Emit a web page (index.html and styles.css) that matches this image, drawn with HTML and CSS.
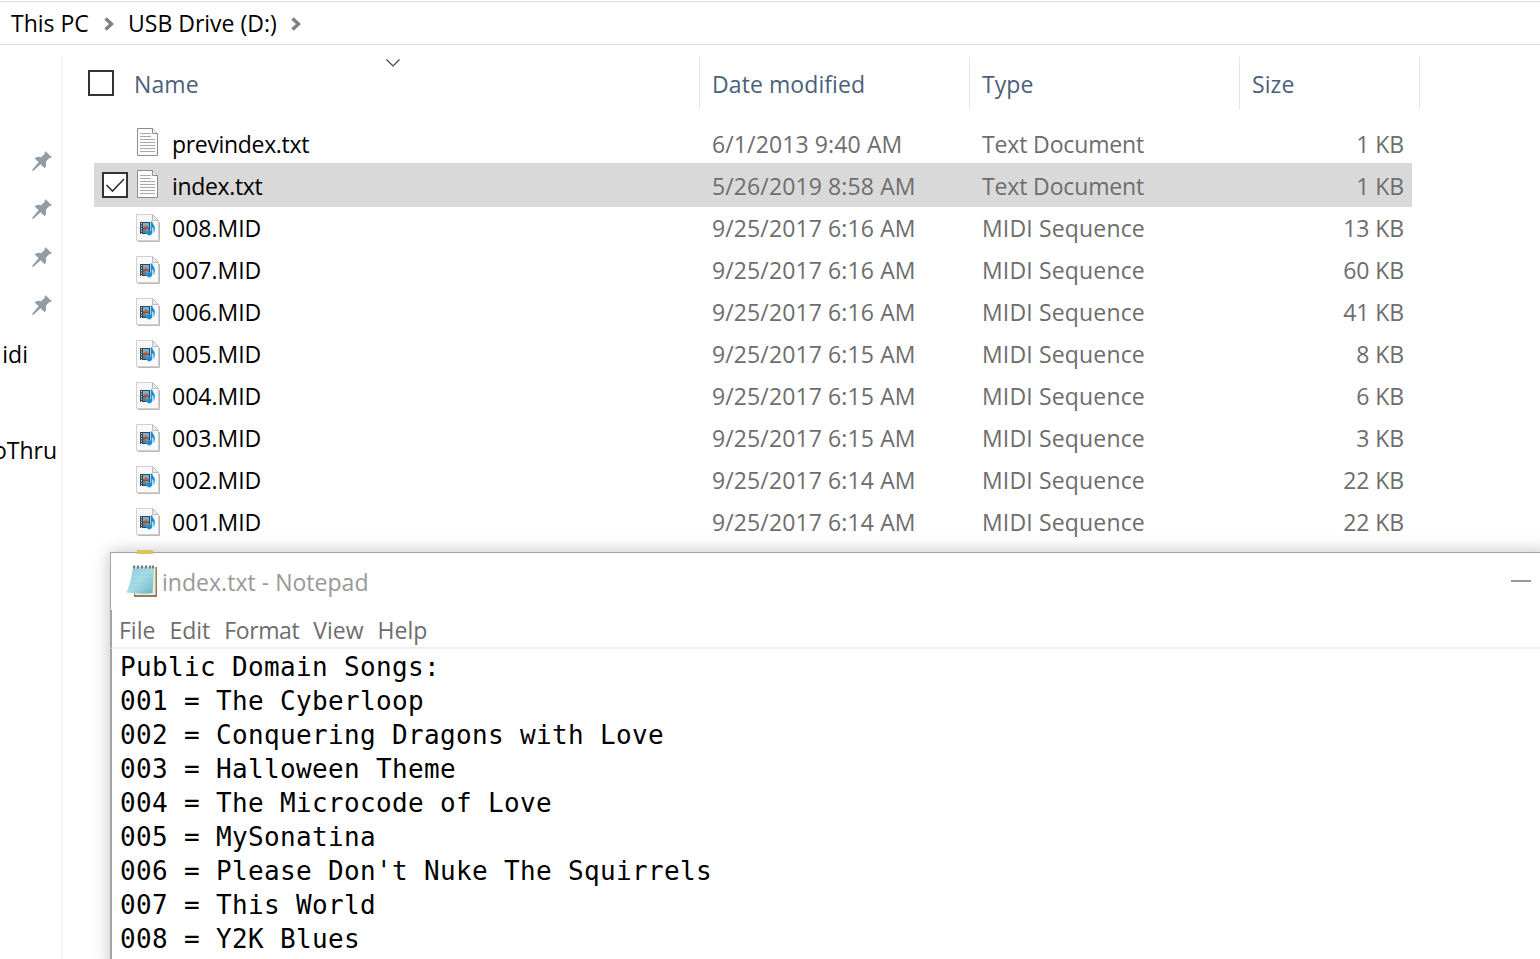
FILE: index.html
```
<!DOCTYPE html>
<html lang="en">
<head>
<meta charset="utf-8">
<title>USB Drive (D:)</title>
<link rel="stylesheet" href="styles.css">
</head>
<body>
<svg class="defs" width="0" height="0" aria-hidden="true">
  <symbol id="txt" viewBox="0 0 24 30">
    <path d="M1.500 1.500H16.500L21.500 6.500V28.500H1.500Z" fill="#fbfbfb" stroke="#8c8c8c"/>
    <path d="M16.500 1.500V6.500H21.500" fill="#f4f4f4" stroke="#8c8c8c"/>
    <path d="M4 6.500H15M4 9.500H15M4 12.500H19M4 15.500H19M4 18.500H19M4 21.500H19M4 24.500H19" stroke="#a9a9a9"/>
  </symbol>
  <symbol id="mid" viewBox="0 0 24 28">
    <path d="M2 27.500H23.500V8" fill="none" stroke="#b9b9b9" stroke-width="1"/>
    <path d="M.5.500H16.500L22.500 6.500V26.500H.5Z" fill="#f9f9f9" stroke="#d0d0d0"/>
    <path d="M16.500.500V6.500H22.500Z" fill="#e9e9e9" stroke="#bdbdbd"/>
    <path d="M4 8H14V20H4Z" fill="#3c4248"/>
    <path d="M5.500 9V20" stroke="#e2e2e2" stroke-dasharray="1.200 1.300"/>
    <path d="M7 9H13V13.500H7Z" fill="#6bb8dc"/><path d="M7 14.500H13V19H7Z" fill="#4389ae"/>
    <path d="M7 13.500L10 11L13 13.500Z" fill="#dc5937"/><path d="M8 16L12 14.500V17Z" fill="#dd8052"/>
    <path d="M14.700 7.500H16.200C16.600 10.500 19.500 11.500 18.800 15.500C18.600 17 18 18 17.300 18.700C18 15.600 17.500 14 16.200 13.300V18.500C16.200 20.500 14.200 21.800 12.200 21.200C10.200 20.500 10.200 18.200 12 17.100C13 16.500 14 16.500 14.700 16.800Z" fill="#1688d0" stroke="#79c7f1" stroke-width=".4"/>
  </symbol>
  <symbol id="pin" viewBox="0 0 20 20">
    <path d="M13.600.2L19.800 6.300L18.600 7.300L17.500 6.900L13.700 10.800C14.600 13.400 14.300 15.400 12.600 17.200L8.600 13.300L1.200 20L0 18.900L6.600 11.300L2.700 7.400C4.600 5.600 6.800 5.400 9.100 6.300L12.900 2.600L12.500 1.300Z" fill="#929da4"/>
  </symbol>
  <symbol id="next" viewBox="0 0 10 14">
    <path d="M1.500 1.500L7.500 7L1.500 12.500" fill="none" stroke="#808080" stroke-width="3.400"/>
  </symbol>
</svg>

<div class="screen">
  <header class="address">
    <span class="crumb pc">This PC</span>
    <svg class="next"><use href="#next"/></svg>
    <span class="crumb drive">USB Drive (D:)</span>
    <svg class="next"><use href="#next"/></svg>
  </header>

  <div class="explorer">
    <nav class="tree">
      <div class="node"><svg class="pin"><use href="#pin"/></svg></div>
      <div class="node"><svg class="pin"><use href="#pin"/></svg></div>
      <div class="node"><svg class="pin"><use href="#pin"/></svg></div>
      <div class="node"><svg class="pin"><use href="#pin"/></svg></div>
      <div class="node midi"><span>idi</span></div>
      <div class="node"></div>
      <div class="node thru"><span>oThru</span></div>
    </nav>

    <main class="files">
      <div class="heads">
        <div class="head first"><span class="box"></span><span class="h-name">Name</span>
          <svg class="sort" viewBox="0 0 14 8"><path d="M.5.500L7 7L13.500.500" fill="none" stroke="#444" stroke-width="1.200"/></svg></div>
        <div class="head h-date">Date modified</div>
        <div class="head h-type">Type</div>
        <div class="head h-size">Size</div>
      </div>
      <div class="rows">
        <div class="row"><svg class="icon txt"><use href="#txt"/></svg><span class="name prev">previndex.txt</span><span class="date">6/1/2013 9:40 AM</span><span class="type doc">Text Document</span><span class="size">1 KB</span></div>
        <div class="row selected"><span class="box"><svg viewBox="0 0 26 26"><path d="M4.500 13L10.500 19L22 7" fill="none" stroke="#333" stroke-width="1.600"/></svg></span><svg class="icon txt"><use href="#txt"/></svg><span class="name prev">index.txt</span><span class="date">5/26/2019 8:58 AM</span><span class="type doc">Text Document</span><span class="size">1 KB</span></div>
        <div class="row"><svg class="icon mid"><use href="#mid"/></svg><span class="name">008.MID</span><span class="date">9/25/2017 6:16 AM</span><span class="type">MIDI Sequence</span><span class="size">13 KB</span></div>
        <div class="row"><svg class="icon mid"><use href="#mid"/></svg><span class="name">007.MID</span><span class="date">9/25/2017 6:16 AM</span><span class="type">MIDI Sequence</span><span class="size">60 KB</span></div>
        <div class="row"><svg class="icon mid"><use href="#mid"/></svg><span class="name">006.MID</span><span class="date">9/25/2017 6:16 AM</span><span class="type">MIDI Sequence</span><span class="size">41 KB</span></div>
        <div class="row"><svg class="icon mid"><use href="#mid"/></svg><span class="name">005.MID</span><span class="date">9/25/2017 6:15 AM</span><span class="type">MIDI Sequence</span><span class="size">8 KB</span></div>
        <div class="row"><svg class="icon mid"><use href="#mid"/></svg><span class="name">004.MID</span><span class="date">9/25/2017 6:15 AM</span><span class="type">MIDI Sequence</span><span class="size">6 KB</span></div>
        <div class="row"><svg class="icon mid"><use href="#mid"/></svg><span class="name">003.MID</span><span class="date">9/25/2017 6:15 AM</span><span class="type">MIDI Sequence</span><span class="size">3 KB</span></div>
        <div class="row"><svg class="icon mid"><use href="#mid"/></svg><span class="name">002.MID</span><span class="date">9/25/2017 6:14 AM</span><span class="type">MIDI Sequence</span><span class="size">22 KB</span></div>
        <div class="row"><svg class="icon mid"><use href="#mid"/></svg><span class="name">001.MID</span><span class="date">9/25/2017 6:14 AM</span><span class="type">MIDI Sequence</span><span class="size">22 KB</span></div>
      </div>
    </main>
  </div>

  <section class="notepad">
    <span class="folder"></span>
    <div class="titlebar">
      <svg class="app" viewBox="0 0 32 36">
        <defs><linearGradient id="page" x1="0" y1="0" x2="1" y2="1"><stop offset="0" stop-color="#8fcbd9"/><stop offset=".5" stop-color="#a9dce7"/><stop offset="1" stop-color="#62b2c7"/></linearGradient></defs>
        <path d="M8 31L27 4H31V34H8Z" fill="#8e7c56"/>
        <path d="M9 30L27 4H29.500V32H9Z" fill="#f0ead6"/>
        <path d="M7 4H28L26.500 30Q17 31.500 .5 29.500Q5 20 7 4Z" fill="url(#page)"/>
        <path d="M7 8H27M6.500 12H27M6 16H26.500M5 20H26.500M4 24H26" stroke="#93cdda" stroke-width=".7"/>
        <path d="M8 2.500V5.500M12 2.500V5.500M16 2.500V5.500M20 2.500V5.500M24 2.500V5.500M27 2.500V5.500" stroke="#727c80" stroke-width="2"/>
        <path d="M9.500 3V6M13.500 3V6M17.500 3V6M21.500 3V6M25.500 3V6" stroke="#d3dcdf" stroke-width="1"/>
      </svg>
      <span class="title">index.txt - Notepad</span>
      <span class="minimize"></span>
    </div>
    <div class="menu"><span>File</span><span>Edit</span><span class="format">Format</span><span>View</span><span>Help</span></div>
    <pre class="text">Public Domain Songs:
001 = The Cyberloop
002 = Conquering Dragons with Love
003 = Halloween Theme
004 = The Microcode of Love
005 = MySonatina
006 = Please Don't Nuke The Squirrels
007 = This World
008 = Y2K Blues</pre>
  </section>
</div>
</body>
</html>
```
FILE: styles.css
```
* { box-sizing: border-box; }
body { margin: 0; background: #fff; font: 23px/42px "Open Sans", "Noto Sans", sans-serif; color: #000; }
.defs { position: absolute; }
.screen { position: relative; width: 1540px; height: 959px; overflow: hidden; background: #fff; display: flex; flex-direction: column; white-space: nowrap; }

.address { height: 44px; flex: none; margin-top: 1px; border-top: 1px solid #d9d9d9; border-bottom: 1px solid #d9d9d9; display: flex; align-items: center; padding-left: 11px; }
.crumb { flex: none; }
.pc { width: 93px; }
.drive { width: 163px; }
.next { width: 10px; height: 14px; margin-right: 14px; padding-top: 0; transform: translateY(1px); }

.explorer { display: flex; flex: 1; }
.tree { width: 63px; flex: none; margin-top: 12px; padding-top: 80px; border-right: 2px solid #f5f5f5; }
.node { height: 48px; display: flex; align-items: center; justify-content: flex-end; padding-right: 9px; }
.node span { padding-top: 2px; }
.midi { padding-right: 33px; }
.thru { padding-right: 4px; }
.pin { width: 20px; height: 20px; }

.files { flex: 1; padding-left: 25px; }
.heads { display: flex; height: 64px; padding-top: 12px; color: #4c607a; }
.head { width: 270px; height: 52px; line-height: 54px; padding-left: 12px; border-right: 1px solid #e5e5e5; letter-spacing: .08px; }
.first { width: 612px; display: flex; align-items: flex-start; padding: 0; position: relative; }
.h-size { width: 180px; }
.box { width: 26px; height: 26px; flex: none; border: 2px solid #333; background: #fff; }
.first .box { margin: 13px 20px 0 0; }
.sort { position: absolute; left: 298px; top: 2px; width: 14px; height: 8px; }

.rows { padding: 12px 0 0 6px; }
.row { display: flex; align-items: center; width: 1318px; height: 42px; padding: 0 8px 0 42px; color: #6d6d6d; }
.row > span:not(.box) { padding-top: 4px; }
.selected { height: 44px; margin-bottom: -2px; padding-left: 8px; background: #d9d9d9; }
.selected > span:not(.box) { padding-top: 2px; }
.selected .box { margin-right: 8px; }
.selected .box svg { display: block; width: 26px; height: 26px; margin: -2px; }
.icon { flex: none; width: 24px; margin-right: 12px; }
.txt { height: 30px; }
.selected .txt { margin-bottom: 2px; }
.mid { height: 28px; margin-top: 3px; }
.name { width: 540px; color: #000; }
.prev { letter-spacing: -.33px; }
.date { width: 270px; letter-spacing: .12px; }
.type { width: 270px; letter-spacing: .16px; }
.doc { letter-spacing: -.14px; }
.size { flex: 1; text-align: right; letter-spacing: -.1px; }

/* Window stacked over the file list. */
.notepad { position: absolute; left: 110px; top: 552px; width: 1440px; height: 420px; border: 1px solid #a3a3a3; background: #fff; box-shadow: 0 0 16px rgba(0,0,0,.25); display: flex; flex-direction: column; }
.folder { position: absolute; left: 26px; top: -3px; width: 16px; height: 4px; background: #dfc260; }
.titlebar { height: 57px; display: flex; align-items: center; padding: 0 0 2px 15px; color: #999; }
.app { width: 32px; height: 36px; margin-right: 4px; }
.title { padding-top: 2px; letter-spacing: .03px; }
.minimize { width: 20px; height: 2px; background: #999; margin-left: auto; margin-right: 18px; }
.menu { height: 39px; line-height: 40px; display: flex; gap: 14px; padding-left: 7px; color: #6d6d6d; border-left: 1px solid #a3a3a3; border-bottom: 2px solid #f0f0f0; }
.format { letter-spacing: -.4px; }
.text { margin: 0; flex: 1; padding: 1px 0 0 8px; border-left: 1px solid #a3a3a3; font: 26px/34px "DejaVu Sans Mono", monospace; letter-spacing: .347px; }
```
